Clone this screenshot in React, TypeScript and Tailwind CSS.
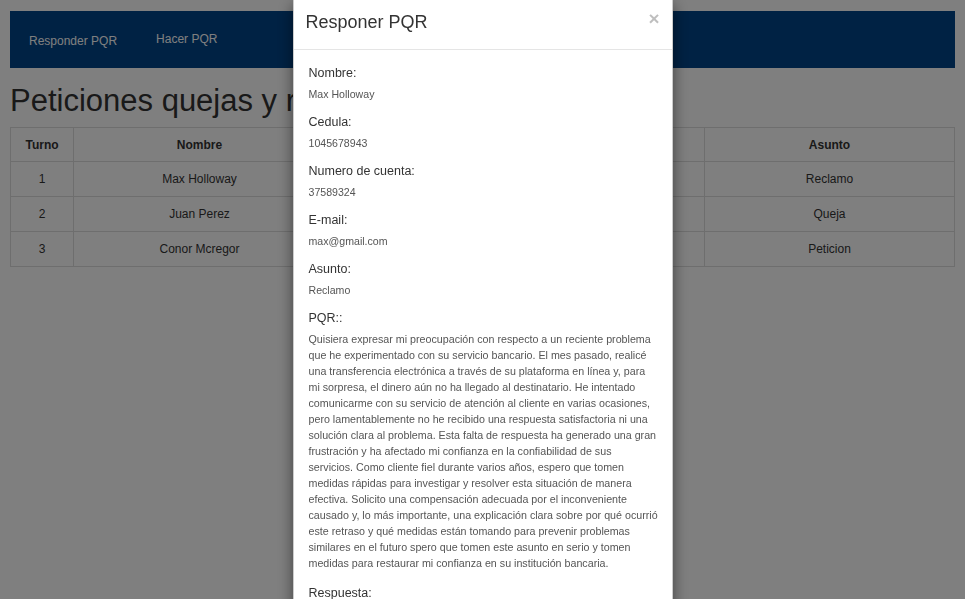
// Página de PQR con el modal "Responer PQR" abierto

const filas = [
  { turno: 1, nombre: "Max Holloway", asunto: "Reclamo" },
  { turno: 2, nombre: "Juan Perez", asunto: "Queja" },
  { turno: 3, nombre: "Conor Mcregor", asunto: "Peticion" },
];

const lineasPqr = [
  "Quisiera expresar mi preocupación con respecto a un reciente problema",
  "que he experimentado con su servicio bancario. El mes pasado, realicé",
  "una transferencia electrónica a través de su plataforma en línea y, para",
  "mi sorpresa, el dinero aún no ha llegado al destinatario. He intentado",
  "comunicarme con su servicio de atención al cliente en varias ocasiones,",
  "pero lamentablemente no he recibido una respuesta satisfactoria ni una",
  "solución clara al problema. Esta falta de respuesta ha generado una gran",
  "frustración y ha afectado mi confianza en la confiabilidad de sus",
  "servicios. Como cliente fiel durante varios años, espero que tomen",
  "medidas rápidas para investigar y resolver esta situación de manera",
  "efectiva. Solicito una compensación adecuada por el inconveniente",
  "causado y, lo más importante, una explicación clara sobre por qué ocurrió",
  "este retraso y qué medidas están tomando para prevenir problemas",
  "similares en el futuro spero que tomen este asunto en serio y tomen",
  "medidas para restaurar mi confianza en su institución bancaria.",
];

const Campo = ({ label, valor }: { label: string; valor: string }) => (
  <div className="mb-[10px]">
    <div className="text-[12.5px] leading-5 text-[#333]">{label}</div>
    <div className="mt-[3px] text-[10.6px] leading-4 text-[#555]">{valor}</div>
  </div>
);

const App = () => {
  return (
    <div
      className="relative h-screen overflow-hidden bg-white p-[10px] pt-[11px]"
      style={{ fontFamily: '"Liberation Sans", Arial, sans-serif' }}
    >
      {/* navbar */}
      <nav className="flex h-[57px] items-center bg-[#004488] pl-[19px] text-[12px] text-white">
        <a className="mt-[2px]">Responder PQR</a>
        <a className="ml-[39px] -mt-[2px]">Hacer PQR</a>
      </nav>

      {/* el modal tapa el resto del título */}
      <h1 className="mt-[13px] w-[283px] overflow-hidden whitespace-nowrap text-[31px] leading-[40px] text-[#333]">
        Peticiones quejas y reclamos
      </h1>

      <table className="mt-[6px] w-full border-collapse text-center text-[12px] text-[#333]">
        <thead>
          <tr className="h-[34px]">
            <th className="w-[63px] border border-[#ddd] font-bold">Turno</th>
            <th className="w-[252px] border border-[#ddd] font-bold">Nombre</th>
            <th className="w-[190px] border border-[#ddd] font-bold"></th>
            <th className="w-[189px] border border-[#ddd] font-bold"></th>
            <th className="border border-[#ddd] font-bold">Asunto</th>
          </tr>
        </thead>
        <tbody>
          {filas.map((f) => (
            <tr key={f.turno} className="h-[35px]">
              <td className="border border-[#ddd]">{f.turno}</td>
              <td className="border border-[#ddd]">{f.nombre}</td>
              <td className="border border-[#ddd]"></td>
              <td className="border border-[#ddd]"></td>
              <td className="border border-[#ddd]">{f.asunto}</td>
            </tr>
          ))}
        </tbody>
      </table>

      {/* backdrop */}
      <div className="fixed inset-0 bg-black/50" />

      {/* modal */}
      <div className="fixed inset-x-0 top-0 mx-auto w-[380px]">
        <div className="rounded-b-md border-x border-black/20 bg-white shadow-[0_5px_15px_rgba(0,0,0,0.5)]">
          <div className="flex h-[50px] items-center justify-between border-b border-[#e5e5e5] px-[12px]">
            <h4 className="-mt-[6px] text-[18px] leading-5 text-[#333]">Responer PQR</h4>
            <button className="-mt-[13px] text-[19px] font-bold leading-none text-black opacity-25">
              ×
            </button>
          </div>
          <div className="px-[15px] pt-[13px]">
            <Campo label="Nombre:" valor="Max Holloway" />
            <Campo label="Cedula:" valor="1045678943" />
            <Campo label="Numero de cuenta:" valor="37589324" />
            <Campo label="E-mail:" valor="max@gmail.com" />
            <Campo label="Asunto:" valor="Reclamo" />
            <div className="mb-[12px]">
              <div className="text-[12.5px] leading-5 text-[#333]">PQR::</div>
              <p className="mt-[3px] text-[10.7px] leading-4 text-[#555]">
                {lineasPqr.map((l, i) => (
                  <span key={i} className="block whitespace-nowrap">
                    {l}
                  </span>
                ))}
              </p>
            </div>
            <div className="text-[12.5px] leading-5 text-[#333]">Respuesta:</div>
            <textarea className="mt-[3px] h-[80px] w-full rounded border border-[#ccc]" />
          </div>
        </div>
      </div>
    </div>
  );
};

export default App;
